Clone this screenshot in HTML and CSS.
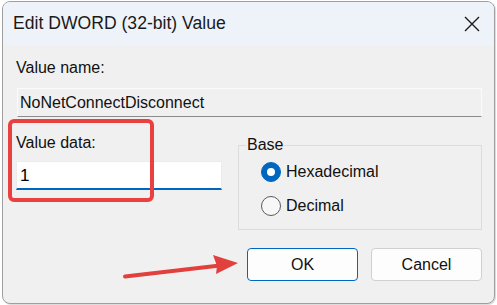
FILE: index.html
```html
<!DOCTYPE html>
<html>
<head>
<meta charset="utf-8">
<link rel="stylesheet" href="styles.css">
</head>
<body>
<div class="window">
  <div class="titlebar">
    <span class="title">Edit DWORD (32-bit) Value</span>
    <svg class="close" width="16" height="16" viewBox="0 0 16 16"><path d="M1 1 L15 15 M15 1 L1 15" stroke="#1b1b1b" stroke-width="1.4" fill="none"/></svg>
  </div>
  <div class="content">
    <div class="label">Value name:</div>
    <div class="namefield">NoNetConnectDisconnect</div>
    <div class="row">
      <div class="datacol">
        <div class="label">Value data:</div>
        <div class="datafield">1</div>
      </div>
      <fieldset class="group">
        <legend>Base</legend>
        <div class="radio"><span class="dot on"></span><span>Hexadecimal</span></div>
        <div class="radio"><span class="dot"></span><span>Decimal</span></div>
      </fieldset>
    </div>
    <div class="buttons">
      <div class="btn primary">OK</div>
      <div class="btn">Cancel</div>
    </div>
  </div>
  <div class="highlight"></div>
  <svg class="arrow" width="497" height="305" viewBox="0 0 497 305">
    <line x1="125" y1="276.5" x2="220" y2="265.5" stroke="#e2403d" stroke-width="4" stroke-linecap="round"/>
    <polygon points="238,263 213,255 217,266 216,274" fill="#e2403d"/>
  </svg>
</div>
</body>
</html>
```
FILE: styles.css
```css
* { box-sizing: border-box; }
html, body { margin: 0; padding: 0; }
body {
  background: #ffffff;
  font-family: "Liberation Sans", Arial, sans-serif;
  color: #000;
  width: 497px;
  height: 305px;
  overflow: hidden;
}
.window {
  position: relative;
  margin: 1px 0 0 2px;
  width: 493px;
  height: 303px;
  border: 1px solid #9f9f9f;
  border-radius: 8px;
  background: #f0f0f0;
  overflow: hidden;
  box-shadow: 1px 1px 1px rgba(0,0,0,0.15);
}
.titlebar {
  height: 43px;
  background: #eef3fa;
  display: flex;
  align-items: center;
  justify-content: space-between;
  padding: 0 14px 0 10px;
}
.title {
  font-size: 17.6px;
  color: #1a1a1a;
}
.close { display: block; margin-top: 0; }
.content {
  padding: 0 12px 0 13px;
  display: flex;
  flex-direction: column;
}
.label {
  font-size: 16px;
  line-height: 20px;
  color: #111;
}
.content > .label { margin-top: 13px; }
.namefield {
  margin-top: 10px;
  margin-left: 1px;
  height: 29px;
  border: 1px solid #fbfbfb;
  border-bottom: 1px solid #8c8c8c;
  background: #f0f0f0;
  font-size: 16px;
  line-height: 27px;
  padding-left: 2px;
  color: #111;
}
.row {
  display: flex;
  margin-top: 16px;
  gap: 16px;
}
.datacol { width: 206px; flex: none; }
.datacol .label { margin-top: 0; }
.datafield {
  margin-top: 8px;
  height: 29px;
  background: #ffffff;
  border: 1px solid #ececec;
  border-bottom: 2px solid #0067c0;
  font-size: 17px;
  line-height: 27px;
  padding-left: 3px;
}
.group {
  flex: 1;
  margin: 3px 0 0 0;
  padding: 8px 0 0 22px;
  height: 94px;
  border: 1px solid #dcdcdc;
  min-width: 0;
}
.group legend {
  font-size: 16px;
  line-height: 18px;
  padding: 0 1px;
  margin-left: -15px;
  color: #111;
}
.radio {
  display: flex;
  align-items: center;
  gap: 5px;
  height: 20px;
  font-size: 16px;
  color: #111;
  margin-bottom: 14px;
}
.dot {
  width: 20px;
  height: 20px;
  border-radius: 50%;
  border: 1px solid #5a5a5a;
  background: #f7f7f7;
  flex: none;
  display: flex;
  align-items: center;
  justify-content: center;
}
.dot.on {
  background: #0067c0;
  border-color: #0067c0;
}
.dot.on::after {
  content: "";
  width: 8px;
  height: 8px;
  border-radius: 50%;
  background: #ffffff;
}
.buttons {
  display: flex;
  justify-content: flex-end;
  gap: 13px;
  margin-top: 18px;
}
.btn {
  width: 111px;
  height: 33px;
  border: 1px solid #d0d0d0;
  border-radius: 4px;
  background: #fdfdfd;
  font-size: 16px;
  line-height: 31px;
  text-align: center;
  color: #111;
}
.btn.primary {
  border: 1px solid #0067c0;
}
.highlight {
  position: absolute;
  left: 5px;
  top: 117px;
  width: 146px;
  height: 83px;
  border: 4px solid #ea4040;
  border-radius: 6px;
}
.arrow {
  position: absolute;
  left: -3px;
  top: -2px;
}
```
